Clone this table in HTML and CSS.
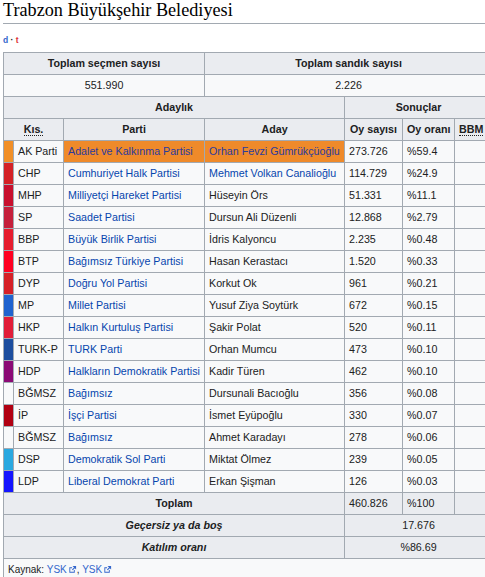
FILE: index.html
```html
<!DOCTYPE html>
<html lang="tr">
<head>
<meta charset="utf-8">
<title>Trabzon Büyükşehir Belediyesi</title>
<link rel="stylesheet" href="styles.css">
</head>
<body>
<h1 class="title">Trabzon Büyükşehir Belediyesi</h1>
<div class="navbar"><a class="nav-d" href="#">d</a> · <a class="nav-t" href="#">t</a></div>
<table class="results">
  <colgroup>
    <col class="c-strip"><col class="c-kis"><col class="c-parti"><col class="c-aday"><col class="c-oy"><col class="c-oran"><col class="c-bbm">
  </colgroup>
  <tr class="hdr">
    <th colspan="3">Toplam seçmen sayısı</th>
    <th colspan="4">Toplam sandık sayısı</th>
  </tr>
  <tr class="plain center">
    <td colspan="3">551.990</td>
    <td colspan="4">2.226</td>
  </tr>
  <tr class="hdr">
    <th colspan="4">Adaylık</th>
    <th colspan="3">Sonuçlar</th>
  </tr>
  <tr class="hdr">
    <th colspan="2"><abbr>Kıs.</abbr></th>
    <th>Parti</th>
    <th>Aday</th>
    <th>Oy sayısı</th>
    <th>Oy oranı</th>
    <th class="left"><abbr>BBM</abbr></th>
  </tr>
  <tr>
    <td class="strip s-ak"></td><td class="kis">AK Parti</td>
    <td class="win"><a href="#">Adalet ve Kalkınma Partisi</a></td>
    <td class="win"><a href="#">Orhan Fevzi Gümrükçüoğlu</a></td>
    <td>273.726</td><td>%59.4</td><td></td>
  </tr>
  <tr>
    <td class="strip s-chp"></td><td>CHP</td>
    <td><a href="#">Cumhuriyet Halk Partisi</a></td>
    <td><a href="#">Mehmet Volkan Canalioğlu</a></td>
    <td>114.729</td><td>%24.9</td><td></td>
  </tr>
  <tr>
    <td class="strip s-mhp"></td><td>MHP</td>
    <td><a href="#">Milliyetçi Hareket Partisi</a></td>
    <td>Hüseyin Örs</td>
    <td>51.331</td><td>%11.1</td><td></td>
  </tr>
  <tr>
    <td class="strip s-sp"></td><td>SP</td>
    <td><a href="#">Saadet Partisi</a></td>
    <td>Dursun Ali Düzenli</td>
    <td>12.868</td><td>%2.79</td><td></td>
  </tr>
  <tr>
    <td class="strip s-bbp"></td><td>BBP</td>
    <td><a href="#">Büyük Birlik Partisi</a></td>
    <td>İdris Kalyoncu</td>
    <td>2.235</td><td>%0.48</td><td></td>
  </tr>
  <tr>
    <td class="strip s-btp"></td><td>BTP</td>
    <td><a href="#">Bağımsız Türkiye Partisi</a></td>
    <td>Hasan Kerastacı</td>
    <td>1.520</td><td>%0.33</td><td></td>
  </tr>
  <tr>
    <td class="strip s-dyp"></td><td>DYP</td>
    <td><a href="#">Doğru Yol Partisi</a></td>
    <td>Korkut Ok</td>
    <td>961</td><td>%0.21</td><td></td>
  </tr>
  <tr>
    <td class="strip s-mp"></td><td>MP</td>
    <td><a href="#">Millet Partisi</a></td>
    <td>Yusuf Ziya Soytürk</td>
    <td>672</td><td>%0.15</td><td></td>
  </tr>
  <tr>
    <td class="strip s-hkp"></td><td>HKP</td>
    <td><a href="#">Halkın Kurtuluş Partisi</a></td>
    <td>Şakir Polat</td>
    <td>520</td><td>%0.11</td><td></td>
  </tr>
  <tr>
    <td class="strip s-turk"></td><td>TURK-P</td>
    <td><a href="#">TURK Parti</a></td>
    <td>Orhan Mumcu</td>
    <td>473</td><td>%0.10</td><td></td>
  </tr>
  <tr>
    <td class="strip s-hdp"></td><td>HDP</td>
    <td><a href="#">Halkların Demokratik Partisi</a></td>
    <td>Kadir Türen</td>
    <td>462</td><td>%0.10</td><td></td>
  </tr>
  <tr>
    <td class="strip"></td><td>BĞMSZ</td>
    <td><a href="#">Bağımsız</a></td>
    <td>Dursunali Bacıoğlu</td>
    <td>356</td><td>%0.08</td><td></td>
  </tr>
  <tr>
    <td class="strip s-ip"></td><td>İP</td>
    <td><a href="#">İşçi Partisi</a></td>
    <td>İsmet Eyüpoğlu</td>
    <td>330</td><td>%0.07</td><td></td>
  </tr>
  <tr>
    <td class="strip"></td><td>BĞMSZ</td>
    <td><a href="#">Bağımsız</a></td>
    <td>Ahmet Karadayı</td>
    <td>278</td><td>%0.06</td><td></td>
  </tr>
  <tr>
    <td class="strip s-dsp"></td><td>DSP</td>
    <td><a href="#">Demokratik Sol Parti</a></td>
    <td>Miktat Ölmez</td>
    <td>239</td><td>%0.05</td><td></td>
  </tr>
  <tr>
    <td class="strip s-ldp"></td><td>LDP</td>
    <td><a href="#">Liberal Demokrat Parti</a></td>
    <td>Erkan Şişman</td>
    <td>126</td><td>%0.03</td><td></td>
  </tr>
  <tr class="foot">
    <th colspan="4">Toplam</th>
    <td>460.826</td><td>%100</td><td></td>
  </tr>
  <tr class="foot">
    <th colspan="4"><i>Geçersiz ya da boş</i></th>
    <td colspan="3" class="center">17.676</td>
  </tr>
  <tr class="foot">
    <th colspan="4"><i>Katılım oranı</i></th>
    <td colspan="3" class="center">%86.69</td>
  </tr>
  <tr>
    <td colspan="7" class="source"><span class="src-label">Kaynak:</span> <a href="#" class="ext">YSK<svg class="ext-icon" viewBox="0 0 10 10" width="9" height="9" aria-hidden="true"><path d="M1.5 2.5h3v1h-2v4h4v-2h1v3h-6z" fill="#3366cc"/><path d="M5 1h4v4l-1.4-1.4-2.3 2.3-0.9-0.9 2.3-2.3z" fill="#3366cc"/></svg></a>, <a href="#" class="ext">YSK<svg class="ext-icon" viewBox="0 0 10 10" width="9" height="9" aria-hidden="true"><path d="M1.5 2.5h3v1h-2v4h4v-2h1v3h-6z" fill="#3366cc"/><path d="M5 1h4v4l-1.4-1.4-2.3 2.3-0.9-0.9 2.3-2.3z" fill="#3366cc"/></svg></a></td>
  </tr>
</table>
</body>
</html>
```
FILE: styles.css
```css
html {
  overflow: hidden;
  background: #ffffff;
}
body {
  margin: 0;
  padding: 0 0 0 3px;
  font-family: "Liberation Sans", Arial, sans-serif;
  color: #202122;
  overflow: hidden;
}
a {
  color: #0645ad;
  text-decoration: none;
}
.title {
  margin: 0;
  font-family: "Liberation Serif", "Times New Roman", serif;
  font-weight: normal;
  font-size: 18.2px;
  line-height: 21px;
  padding-bottom: 2px;
  color: #000000;
  border-bottom: 1px solid #a2a9b1;
}
.navbar {
  margin-top: 11px;
  margin-bottom: 7px;
  font-size: 8.5px;
  font-weight: bold;
  line-height: 10px;
  color: #202122;
}
.nav-d {
  color: #3366cc;
}
.nav-t {
  color: #dd3333;
}
.results {
  border-collapse: collapse;
  table-layout: fixed;
  width: 490px;
  font-size: 10.7px;
  background: #f8f9fa;
  border: 1px solid #a2a9b1;
}
.c-strip { width: 10px; }
.c-kis { width: 50px; }
.c-parti { width: 141px; }
.c-aday { width: 140px; }
.c-oy { width: 58px; }
.c-oran { width: 52px; }
.c-bbm { width: 38px; }
.results th,
.results td {
  border: 1px solid #a2a9b1;
  padding: 3px 4px;
  line-height: 15px;
  white-space: nowrap;
  overflow: hidden;
  text-align: left;
  vertical-align: middle;
}
.results th {
  background: #eaecf0;
  font-weight: bold;
  text-align: center;
}
.results th.left {
  text-align: left;
}
.results abbr {
  text-decoration: none;
  border-bottom: 1px dotted #202122;
}
.center td {
  text-align: center;
}
.results td.center {
  text-align: center;
}
.foot td {
  background: #eaecf0;
}
.results td.strip {
  padding: 0;
}
.results td.win {
  background: #ef8a2a;
}
.results td.win a {
  color: #2b3b9e;
}
.s-ak { background: #f18f27; }
.s-chp { background: #d42126; }
.s-mhp { background: #c8102e; }
.s-sp { background: #c51f3b; }
.s-bbp { background: #e61d2e; }
.s-btp { background: #ff0022; }
.s-dyp { background: #d62027; }
.s-mp { background: #2063cf; }
.s-hkp { background: #e11d38; }
.s-turk { background: #1d4e9f; }
.s-hdp { background: #8b0a75; }
.s-ip { background: #b10012; }
.s-dsp { background: #2aa8e0; }
.s-ldp { background: #1515ff; }
.results td.source {
  font-size: 10px;
  padding: 3px 4px;
}
.ext {
  color: #3366cc;
}
.ext-icon {
  vertical-align: -1px;
  margin-left: 1px;
}
```
